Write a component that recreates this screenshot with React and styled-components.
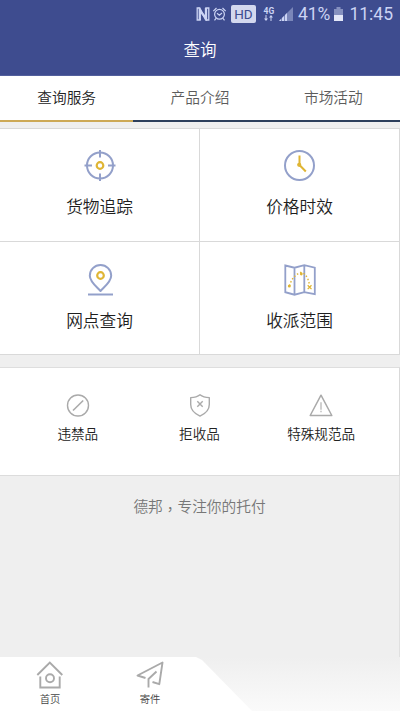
import React, { useState } from 'react';
import styled, { createGlobalStyle } from 'styled-components';

const GlobalStyle = createGlobalStyle`
  * {
    box-sizing: border-box;
  }

  body {
    margin: 0;
    background: #efefef;
    font-family: 'Noto Sans CJK SC', sans-serif;
    font-weight: 350;
  }
`;

const Page = styled.div`
  display: flex;
  flex-direction: column;
  width: 400px;
  height: 711px;
  background: #efefef;
  overflow: hidden;
`;

const StatusBar = styled.div`
  display: flex;
  align-items: center;
  justify-content: flex-end;
  height: 26px;
  padding: 1px 7px 0 0;
  background: #3e4c8f;
  color: #ccd4f4;
  font-family: Roboto, sans-serif;
  font-weight: 400;

  svg {
    display: block;
    flex: none;
  }
`;

const HdBadge = styled.span`
  width: 25px;
  height: 18px;
  margin: 0 7px 0 2px;
  border-radius: 2px;
  background: #d3d8ee;
  color: #3e4c8f;
  font-size: 13.5px;
  line-height: 18px;
  text-align: center;
`;

const Network = styled.div`
  display: flex;
  flex-direction: column;
  align-items: center;
  width: 12px;
  margin-right: 4px;
  font-size: 8.5px;
  font-weight: 700;
  line-height: 8px;
`;

const StatusText = styled.span`
  margin: ${(props) => props.$margin || 0};
  font-size: 17.5px;
  line-height: 20px;
  white-space: nowrap;
`;

const Header = styled.h1`
  height: 50px;
  margin: 0;
  border-bottom: 1px solid #53609d;
  background: #3e4c8f;
  color: #fff;
  font-size: 16.5px;
  font-weight: inherit;
  line-height: 47px;
  text-align: center;
`;

const Tabs = styled.div`
  display: flex;
  height: 46px;
  background: #fff;
`;

const Tab = styled.button`
  flex: 1;
  padding: 0 0 3px;
  border: 0;
  border-bottom: 2px solid ${(props) => (props.$active ? '#cda956' : '#2d3f5c')};
  background: none;
  color: ${(props) => (props.$active ? '#222' : '#5c5c5c')};
  font-family: inherit;
  font-size: 14.7px;
  font-weight: inherit;
  line-height: 41px;
`;

const Grid = styled.div`
  display: grid;
  grid-template-columns: 200px 200px;
  grid-template-rows: 113px 113px;
  margin-top: 6px;
  border-top: 1px solid #d9d9d9;
`;

const Cell = styled.div`
  display: flex;
  flex-direction: column;
  align-items: center;
  padding-top: 17px;
  border-right: 1px solid #d9d9d9;
  border-bottom: 1px solid #d9d9d9;
  background: #fff;
  color: #1e1e1e;
  font-size: 16.7px;
  line-height: 24px;

  svg {
    display: block;
    width: 40px;
    height: 40px;
    margin-bottom: 8px;
  }

  &:nth-child(n + 3) {
    padding-top: 18px;
  }
`;

const Extras = styled.div`
  display: flex;
  height: 109px;
  margin-top: 12px;
  padding: 0 17px;
  border-top: 1px solid #dedede;
  border-right: 1px solid #d9d9d9;
  border-bottom: 1px solid #dcdcdc;
  background: #fff;
`;

const Extra = styled.div`
  display: flex;
  flex: 1 1 0;
  flex-direction: column;
  align-items: center;
  padding-top: 25px;
  color: #222;
  font-size: 13.6px;
  line-height: 20px;
  white-space: nowrap;

  svg {
    display: block;
    width: 26px;
    height: 26px;
    margin-bottom: 4px;
  }
`;

const Slogan = styled.div`
  flex: 1;
  padding-top: 18px;
  border-right: 1px solid #e0e0e0;
  color: #777;
  font-size: 14.7px;
  line-height: 24px;
  text-align: center;
`;

const Comma = styled.span`
  font-family: 'Noto Sans CJK TC', sans-serif;
  line-height: 0;
  vertical-align: -3px;
`;

const BottomBar = styled.div`
  display: flex;
  height: 54px;
  background: linear-gradient(to bottom, #efefef, #fafafa);
`;

const BottomNav = styled.div`
  display: flex;
  width: 252px;
  background: linear-gradient(to right, #fff 0, #fff 100%);
  clip-path: polygon(0 0, 196px 0, 202px 3px, 252px 54px, 0 54px);
`;

const NavItem = styled.div`
  display: flex;
  flex-direction: column;
  align-items: center;
  width: 100px;
  padding-top: 3px;
  color: #444;
  font-size: 10.3px;
  line-height: 14px;

  svg {
    display: block;
    width: 30px;
    height: 30px;
    margin-bottom: 2px;
  }
`;

const BLUE = '#93a0ca';
const GOLD = '#dfb534';
const GREY = '#aaaaaa';

const NfcIcon = () => (
  <svg width="14" height="14" viewBox="0 0 14 14" fill="none" stroke="currentColor">
    <path d="M4.8 13H1.2V1h2.6l5.9 12h3.1V1H9.2" strokeWidth="1.3" />
    <path d="M3.8 13V3.2L10 11.400V1" strokeWidth="2.300" />
  </svg>
);

const AlarmIcon = () => (
  <svg width="19" height="14" viewBox="-2 0 19 14" fill="none" stroke="currentColor" strokeWidth="1.2">
    <circle cx="7.5" cy="7.3" r="4.9" />
    <path d="M1.3 4.2 4.5 1M13.7 4.2 10.5 1M4 11.3l-1.5 2M11 11.3l1.5 2M5 6.2l2.4 2L10 6" />
  </svg>
);

const ArrowsIcon = () => (
  <svg width="9" height="6" viewBox="0 0 9 6" fill="currentColor">
    <path d="M1.500 0h1v3.500H4L2 6 0 3.500h1.500zM7 0l2 2.500H7.500V6h-1V2.500H5z" />
  </svg>
);

const SignalIcon = () => (
  <svg width="14" height="14" viewBox="0 0 14 14">
    <path d="M0 14 14 0v14z" fill="#7a86b9" />
    <path d="M0 14l2-2v2zM3 14v-3l2-2v5zM6 14V8l2-2v8z" fill="currentColor" />
  </svg>
);

const BatteryIcon = () => (
  <svg width="9" height="14" viewBox="0 0 9 14">
    <path d="M0 2h2.5V0h4v2H9v12H0z" fill="#8590bf" />
    <path d="M0 8h9v6H0z" fill="#e3e7f8" />
  </svg>
);

const TargetIcon = () => (
  <svg viewBox="0 0 40 40" fill="none" stroke={BLUE} strokeWidth="2">
    <circle cx="20" cy="19.5" r="13" />
    <path d="M20 4v7.5M20 27.5V35M4.5 19.5H12M28 19.5h7.500" />
    <circle cx="20" cy="19.5" r="3.3" stroke={GOLD} strokeWidth="2.2" />
  </svg>
);

const ClockIcon = () => (
  <svg viewBox="0 0 40 40" fill="none" stroke={BLUE} strokeWidth="2">
    <circle cx="19.5" cy="19.5" r="14.5" />
    <path d="M19.5 9.500V19l6.300 6.500" stroke={GOLD} />
    <circle cx="19.200" cy="18.800" r="2.100" fill={GOLD} stroke="none" />
  </svg>
);

const PinIcon = () => (
  <svg viewBox="0 0 40 40" fill="none" stroke={BLUE} strokeWidth="2">
    <path
      d="M20.500 31C17 27 9.800 21.800 9.800 15.700a10.700 10.700 0 0 1 21.400 0c0 6.100-7.200 11.300-10.700 15.300z"
      strokeLinejoin="round"
    />
    <circle cx="20.500" cy="15.500" r="3.300" stroke={GOLD} strokeWidth="2.200" />
    <path d="M8 34.500h25" />
  </svg>
);

const MapIcon = () => (
  <svg viewBox="0 0 40 40" fill="none" stroke={BLUE} strokeWidth="1.8">
    <path d="M5.300 5.500 14.500 7.700l9.800-2.500 10.500 2.500v26.500l-10.500-2-9.800 2.500-9.200-2.500zM14.500 7.700v27M24.300 5.200v27" />
    <path d="M9.500 26q2.500-10 11-13.500 7 1 9 12.500" stroke={GOLD} strokeWidth="1.400" strokeDasharray="1.500 2" />
    <circle cx="9.300" cy="26" r="1.500" fill={GOLD} stroke="none" />
    <circle cx="21.300" cy="14" r="1.400" fill={GOLD} stroke="none" />
    <path d="m27.700 25.300 3.800 3.800m0-3.800-3.800 3.800" stroke={GOLD} strokeWidth="1.300" />
  </svg>
);

const ForbiddenIcon = () => (
  <svg viewBox="0 0 26 26" fill="none" stroke={GREY} strokeWidth="1.400">
    <circle cx="13" cy="12.500" r="10.500" />
    <path d="M8 17.500 18.200 7.500" strokeWidth="1.600" />
  </svg>
);

const ShieldIcon = () => (
  <svg viewBox="0 0 26 26" fill="none" stroke={GREY} strokeWidth="1.400" strokeLinejoin="round">
    <path d="M13 1.800c2.500 2 5.300 2.700 9.300 2.800v7c0 5.300-4 9.200-9.300 11.500-5.300-2.300-9.300-6.200-9.300-11.500v-7c4-.1 6.800-.8 9.300-2.800z" />
    <path d="m10.300 8.300 5.400 5.400m0-5.400-5.400 5.400" />
  </svg>
);

const WarningIcon = () => (
  <svg viewBox="0 0 26 26" fill="none" stroke={GREY} strokeWidth="1.500" strokeLinejoin="round">
    <path d="M13 2.200 23.800 22.500H2.200z" />
    <path d="M13 9.200v7.500M13 17.800v1.500" strokeWidth="1.100" />
  </svg>
);

const HomeIcon = () => (
  <svg viewBox="0 0 30 30" fill="none" stroke={GREY} strokeWidth="1.900">
    <path d="M2.300 15 14.800 2.500 27.300 15" />
    <path d="M5.300 16.500v11h19.400v-11" />
    <circle cx="15" cy="18.200" r="4" />
  </svg>
);

const SendIcon = () => (
  <svg viewBox="0 0 30 30" fill="none" stroke={GREY} strokeWidth="1.900" strokeLinejoin="round">
    <path d="M10.500 18 2.500 15.500 27.500 2.500 24.300 24.200 17.500 22" />
    <path d="M21.500 11.500 13.500 19v8.500" />
  </svg>
);

const tabs = ['查询服务', '产品介绍', '市场活动'];

const services = [
  { label: '货物追踪', Icon: TargetIcon },
  { label: '价格时效', Icon: ClockIcon },
  { label: '网点查询', Icon: PinIcon },
  { label: '收派范围', Icon: MapIcon },
];

const extras = [
  { label: '违禁品', Icon: ForbiddenIcon },
  { label: '拒收品', Icon: ShieldIcon },
  { label: '特殊规范品', Icon: WarningIcon },
];

const navItems = [
  { label: '首页', Icon: HomeIcon },
  { label: '寄件', Icon: SendIcon },
];

function App() {
  const [activeTab, setActiveTab] = useState(0);

  return (
    <Page>
      <GlobalStyle />
      <StatusBar>
        <NfcIcon />
        <AlarmIcon />
        <HdBadge>HD</HdBadge>
        <Network>
          4G
          <ArrowsIcon />
        </Network>
        <SignalIcon />
        <StatusText $margin="0 4px 0 5px">41%</StatusText>
        <BatteryIcon />
        <StatusText $margin="0 0 0 6px">11:45</StatusText>
      </StatusBar>
      <Header>查询</Header>

      <Tabs>
        {tabs.map((tab, index) => (
          <Tab key={tab} $active={activeTab === index} onClick={() => setActiveTab(index)}>
            {tab}
          </Tab>
        ))}
      </Tabs>

      <Grid>
        {services.map(({ label, Icon }) => (
          <Cell key={label}>
            <Icon />
            {label}
          </Cell>
        ))}
      </Grid>

      <Extras>
        {extras.map(({ label, Icon }) => (
          <Extra key={label}>
            <Icon />
            {label}
          </Extra>
        ))}
      </Extras>

      <Slogan>
        德邦<Comma>，</Comma>专注你的托付
      </Slogan>

      <BottomBar>
        <BottomNav>
          {navItems.map(({ label, Icon }) => (
            <NavItem key={label}>
              <Icon />
              {label}
            </NavItem>
          ))}
        </BottomNav>
      </BottomBar>
    </Page>
  );
}

export default App;
